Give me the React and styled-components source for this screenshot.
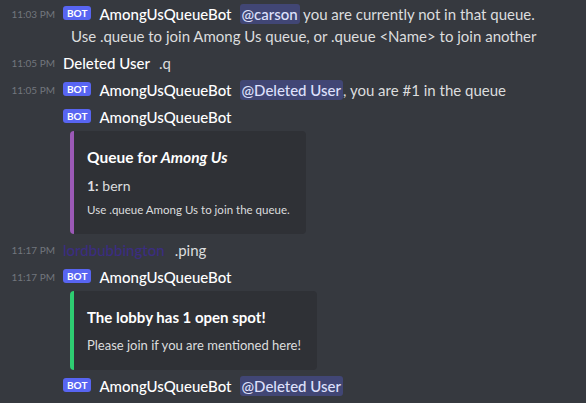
import React from "react";
import styled, { createGlobalStyle } from "styled-components";

const GlobalStyle = createGlobalStyle`
  html, body {
    margin: 0;
    padding: 0;
    background: #36393f;
  }
  body {
    font-family: "Lato", "Noto Sans", sans-serif;
    overflow: hidden;
  }
`;

const Chat = styled.div`
  width: 586px;
  height: 403px;
  padding-top: 1px;
  box-sizing: border-box;
  color: #dcddde;
  font-size: 15px;
  line-height: 22px;
`;

const Message = styled.div`
  padding: 2px 0 3px;
`;

const Line = styled.div`
  display: flex;
  align-items: center;
  height: 22px;
  white-space: nowrap;
`;

const Timestamp = styled.span`
  width: 55px;
  flex: none;
  margin-right: 8px;
  text-align: right;
  font-size: 10px;
  color: #72767d;
`;

const BotTag = styled.span`
  display: inline-flex;
  align-items: center;
  height: 14px;
  padding: 0 4px;
  margin-right: 8px;
  margin-top: -2px;
  border-radius: 3px;
  background: #5865f2;
  color: #fff;
  font-size: 10px;
  font-weight: 700;
  line-height: 14px;
`;

const Name = styled.span`
  color: ${(p) => p.$color || "#fff"};
  font-weight: 500;
  margin-right: ${(p) => p.$gap || 8}px;
`;

const Mention = styled.span`
  background: #414675;
  color: #dee0fc;
  font-weight: 500;
  border-radius: 3px;
  padding: 0 2px;
  line-height: 20px;
`;

const Text = styled.span`
  color: #dcddde;
`;

const Continuation = styled.div`
  padding-left: 71px;
  height: 22px;
  white-space: nowrap;
`;

const Embed = styled.div`
  margin: 3px 0 0 70px;
  width: fit-content;
  background: #2f3136;
  border-left: 4px solid ${(p) => p.$accent};
  border-radius: 4px;
  padding: 16px 16px 16px 13px;
`;

const EmbedTitle = styled.div`
  color: #fff;
  font-weight: 700;
  font-size: ${(p) => p.$size || 15}px;
  line-height: 20px;

  em {
    font-style: italic;
  }
`;

const Field = styled.div`
  margin-top: 10px;
  font-size: 14px;
  line-height: 18px;

  b {
    font-weight: 700;
  }
`;

const Description = styled.div`
  margin-top: ${(p) => p.$mt || 7}px;
  font-size: ${(p) => p.$size || 11.5}px;
  line-height: ${(p) => p.$lh || 16}px;
  color: #dcddde;
`;

export default function App() {
  return (
    <>
      <GlobalStyle />
      <Chat>
        <Message>
          <Line>
            <Timestamp>11:03 PM</Timestamp>
            <BotTag>BOT</BotTag>
            <Name>AmongUsQueueBot</Name>
            <Mention>@carson</Mention>
            <Text>&nbsp;you are currently not in that queue.</Text>
          </Line>
          <Continuation>
            Use .queue to join Among Us queue, or .queue &lt;Name&gt; to join another
          </Continuation>
        </Message>

        <Message>
          <Line>
            <Timestamp>11:05 PM</Timestamp>
            <Name $gap={9}>Deleted User</Name>
            <Text>.q</Text>
          </Line>
        </Message>

        <Message>
          <Line>
            <Timestamp>11:05 PM</Timestamp>
            <BotTag>BOT</BotTag>
            <Name>AmongUsQueueBot</Name>
            <Mention>@Deleted User</Mention>
            <Text>, you are #1 in the queue</Text>
          </Line>
        </Message>

        <Message>
          <Line>
            <Timestamp />
            <BotTag>BOT</BotTag>
            <Name>AmongUsQueueBot</Name>
          </Line>
          <Embed $accent="#9b59b6">
            <EmbedTitle $size={15.5}>
              Queue for <em>Among Us</em>
            </EmbedTitle>
            <Field>
              <b>1:</b> bern
            </Field>
            <Description>Use .queue Among Us to join the queue.</Description>
          </Embed>
        </Message>

        <Message>
          <Line>
            <Timestamp>11:17 PM</Timestamp>
            <Name $color="#3b2d80" $gap={10}>lordbubbington</Name>
            <Text>.ping</Text>
          </Line>
        </Message>

        <Message>
          <Line>
            <Timestamp>11:17 PM</Timestamp>
            <BotTag>BOT</BotTag>
            <Name>AmongUsQueueBot</Name>
          </Line>
          <Embed $accent="#2ecc71">
            <EmbedTitle>The lobby has 1 open spot!</EmbedTitle>
            <Description $mt={9} $size={13} $lh={18}>
              Please join if you are mentioned here!
            </Description>
          </Embed>
        </Message>

        <Message>
          <Line>
            <Timestamp />
            <BotTag>BOT</BotTag>
            <Name>AmongUsQueueBot</Name>
            <Mention>@Deleted User</Mention>
          </Line>
        </Message>
      </Chat>
    </>
  );
}
